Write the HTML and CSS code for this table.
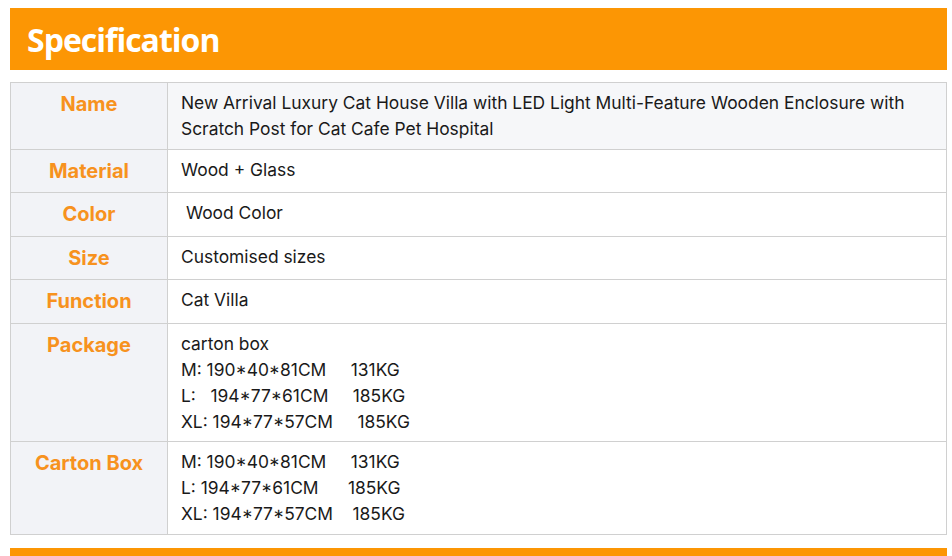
FILE: index.html
```html
<!DOCTYPE html>
<html>
<head>
<meta charset="utf-8">
<link rel="stylesheet" href="styles.css">
</head>
<body>
<div class="page">
  <h2 class="bar">Specification</h2>
  <table class="spec">
    <tr class="shade">
      <th>Name</th>
      <td>New Arrival Luxury Cat House Villa with LED Light Multi-Feature Wooden Enclosure with Scratch Post for Cat Cafe Pet Hospital</td>
    </tr>
    <tr>
      <th>Material</th>
      <td>Wood + Glass</td>
    </tr>
    <tr>
      <th>Color</th>
      <td>&nbsp;Wood Color</td>
    </tr>
    <tr>
      <th>Size</th>
      <td>Customised sizes</td>
    </tr>
    <tr>
      <th>Function</th>
      <td>Cat Villa</td>
    </tr>
    <tr>
      <th>Package</th>
      <td>carton box<br>M: 190*40*81CM&nbsp; &nbsp; &nbsp;131KG<br>L: &nbsp; 194*77*61CM&nbsp; &nbsp; &nbsp;185KG<br>XL: 194*77*57CM&nbsp; &nbsp; &nbsp;185KG</td>
    </tr>
    <tr>
      <th>Carton Box</th>
      <td>M: 190*40*81CM&nbsp; &nbsp; &nbsp;131KG<br>L: 194*77*61CM&nbsp; &nbsp; &nbsp; 185KG<br>XL: 194*77*57CM&nbsp; &nbsp; 185KG</td>
    </tr>
  </table>
  <div class="bar bar-bottom"></div>
</div>
</body>
</html>
```
FILE: styles.css
```css
html, body {
  margin: 0;
  padding: 0;
  background: #ffffff;
}
.page {
  padding: 8px 5px 0 10px;
  width: 937px;
}
.bar {
  background: #fc9604;
  margin: 0;
}
h2.bar {
  height: 62px;
  box-sizing: border-box;
  padding: 0 0 0 17px;
  font-family: "Open Sans", sans-serif;
  font-weight: 700;
  font-size: 32px;
  letter-spacing: -1px;
  line-height: 64px;
  color: #ffffff;
}
.bar-bottom {
  height: 10px;
  margin-top: 13px;
}
.spec {
  margin-top: 12px;
  width: 937px;
  border-collapse: collapse;
  border: 1px solid #cccccc;
  font-family: "Inter", sans-serif;
}
.spec th, .spec td {
  border: 1px solid #d0d0d0;
  vertical-align: top;
}
.spec th {
  width: 157px;
  box-sizing: border-box;
  background: #f2f3f7;
  color: #f7921e;
  font-size: 20px;
  font-weight: 700;
  line-height: 28.5px;
  text-align: center;
  padding: 7px 4px 7px;
}
.spec td {
  color: #1a1a1a;
  font-size: 17.4px;
  line-height: 26px;
  padding: 7px 13px 6.5px 13px;
  background: #ffffff;
}
.spec tr.shade td {
  background: #f6f7f9;
}
```
